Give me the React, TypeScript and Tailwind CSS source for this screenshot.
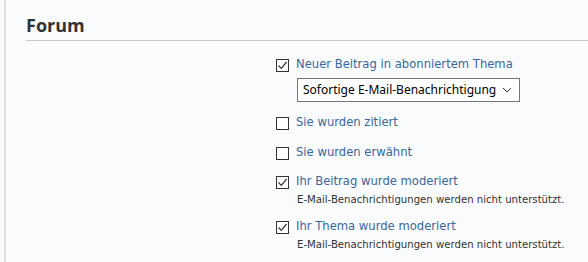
import React from "react";

const Check = ({ checked }: { checked: boolean }) => (
  <span className="w-[13px] h-[13px] border border-[#333] bg-white flex items-center justify-center shrink-0">
    {checked && (
      <svg width="11" height="11" viewBox="0 0 11 11" fill="none">
        <path d="M1.5 5.5 L4.3 8.3 L9.5 2" stroke="#333" strokeWidth="1.2" />
      </svg>
    )}
  </span>
);

const Option = ({ label, checked, hint }: { label: string; checked: boolean; hint?: string }) => (
  <div className="flex flex-col">
    <label className="flex items-center gap-[7px] h-[16px]">
      <Check checked={checked} />
      <span className="text-[11.6px] text-[#3a679a] whitespace-nowrap">{label}</span>
    </label>
    {hint && <div className="text-[10.15px] leading-[14px] text-[#333] pl-[21px] mt-[3px] whitespace-nowrap">{hint}</div>}
  </div>
);

export default function App() {
  return (
    <div className="w-[588px] h-[262px] bg-[#fafbfd] overflow-hidden" style={{ fontFamily: '"DejaVu Sans", Verdana, sans-serif' }}>
      <div className="ml-[4px] h-full border-l-2 border-[#e0e2e6] pl-[20px]">
        <div className="h-[41px] border-b border-[#c8cacd] flex items-end pb-[6px]">
          <h2 className="text-[18px] leading-none font-bold text-[#333]" style={{ fontFamily: '"Open Sans", sans-serif' }}>Forum</h2>
        </div>
        <div className="pl-[250px] pt-[16px] flex flex-col">
          <Option label="Neuer Beitrag in abonniertem Thema" checked />
          <div className="pl-[21px] mt-[5px]">
            <div className="w-[223px] h-[24px] border border-[#767676] bg-white flex items-center justify-between pl-[5px] pr-[7px] text-[12px] text-black" style={{ fontFamily: '"Noto Sans", sans-serif' }}>
              <span className="whitespace-nowrap">Sofortige E-Mail-Benachrichtigung</span>
              <svg width="10" height="6" viewBox="0 0 10 6" fill="none">
                <path d="M1 1 L5 5 L9 1" stroke="#333" strokeWidth="1" />
              </svg>
            </div>
          </div>
          <div className="mt-[13px] flex flex-col">
            <Option label="Sie wurden zitiert" checked={false} />
            <div className="mt-[14px]">
              <Option label="Sie wurden erwähnt" checked={false} />
            </div>
            <div className="mt-[13px]">
              <Option label="Ihr Beitrag wurde moderiert" checked hint="E-Mail-Benachrichtigungen werden nicht unterstützt." />
            </div>
            <div className="mt-[12px]">
              <Option label="Ihr Thema wurde moderiert" checked hint="E-Mail-Benachrichtigungen werden nicht unterstützt." />
            </div>
          </div>
        </div>
      </div>
    </div>
  );
}
